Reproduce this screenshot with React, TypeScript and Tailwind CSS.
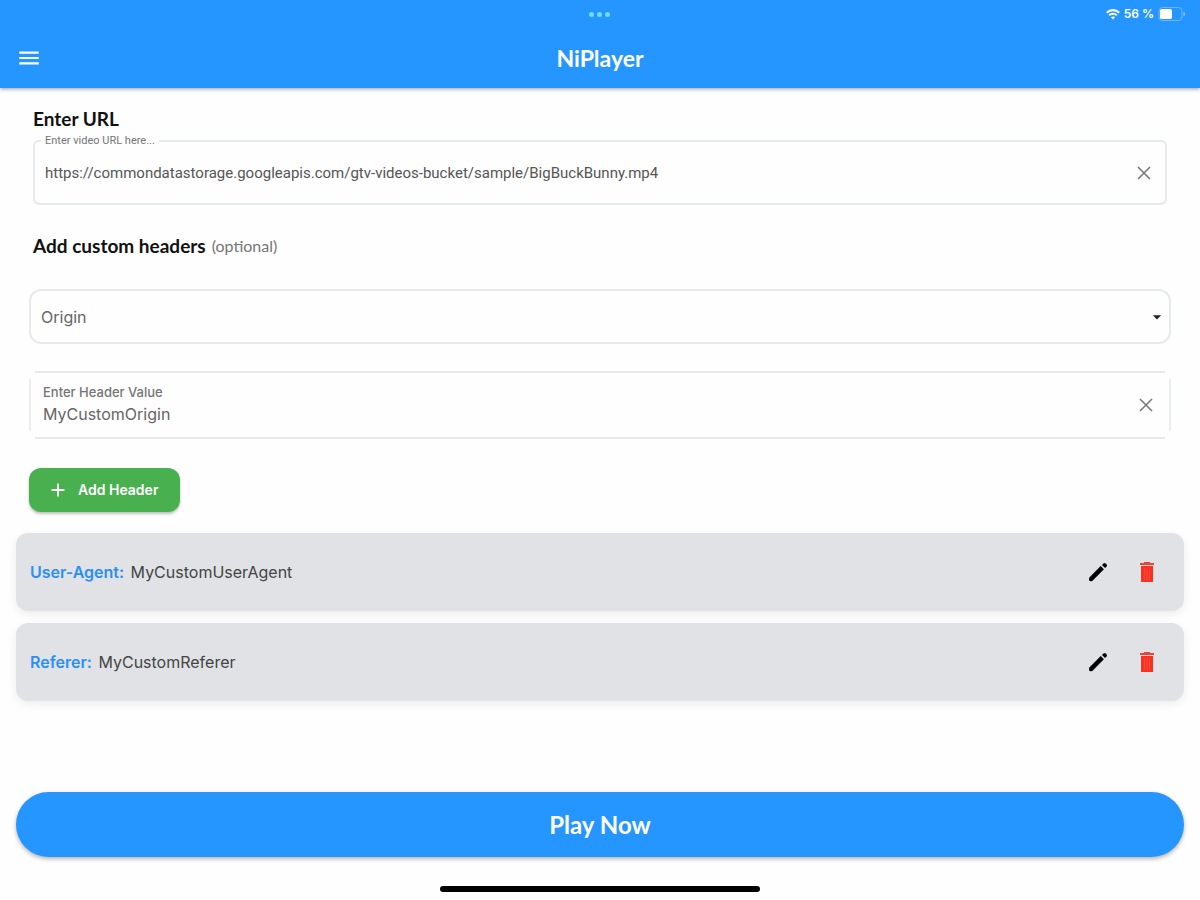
import React, { useState } from "react";
import { MdAdd, MdArrowDropDown, MdMenu } from "react-icons/md";

const headers = [
  { name: "User-Agent", value: "MyCustomUserAgent" },
  { name: "Referer", value: "MyCustomReferer" },
];

const CloseIcon = () => (
  <svg viewBox="0 0 14 14" className="w-3.5 h-3.5" stroke="#757575" strokeWidth="1.5" fill="none">
    <path d="M1 1L13 13M13 1L1 13" />
  </svg>
);

const PencilIcon = () => (
  <svg viewBox="0 0 20 20" className="w-5 h-5" fill="black">
    <path d="M1.6 15.2L12.7 4.1L15.9 7.3L4.8 18.4Q3.8 19.3 2.4 19.3Q1 19.3 1 17.6Q1 16 1.6 15.2Z" />
    <path d="M14 3.1L15.6 1.5Q16.6 0.7 17.6 1.5L18.6 2.5Q19.4 3.5 18.6 4.5L17 6.1Z" />
  </svg>
);

const TrashIcon = () => (
  <svg viewBox="0 0 14 20" className="w-3.5 h-5">
    <path d="M4 0H10V1H14V3H0V1H4Z" fill="#f5402f" />
    <path d="M1 4H13V20H1Z" fill="#fa3020" />
    <path d="M4.5 6V18M7 6V18M9.5 6V18" stroke="#fb4a3a" strokeWidth="1" />
  </svg>
);

const WifiIcon = () => (
  <svg viewBox="0 0 14 11" className="w-3.5 h-3" fill="none" stroke="white" strokeWidth="2.2">
    <path d="M0.8 4.2C4.4 0.7 9.6 0.7 13.2 4.2" />
    <path d="M3.2 6.8C5.4 4.8 8.6 4.8 10.8 6.8" />
    <path d="M7 11L4.9 8.7C6 7.7 8 7.7 9.1 8.7Z" fill="white" stroke="none" />
  </svg>
);

const BatteryIcon = () => (
  <svg viewBox="0 0 27 14" className="w-7 h-3.5">
    <rect x="0.5" y="0.5" width="23" height="13" rx="3.5" fill="none" stroke="#6db8ff" />
    <rect x="1.5" y="2" width="12" height="10" rx="1.5" fill="white" />
    <path d="M25 4.5C27 5.5 27 8.5 25 9.5Z" fill="#8cc6ff" />
  </svg>
);

const TopBar = () => {
  return (
    <header className="bg-[#2596ff] text-white h-[88px] shadow-[0_1px_4px_rgba(0,0,0,0.4)]">
      <div className="grid grid-cols-3 items-center h-7 px-3.5">
        <span />
        <div className="flex justify-center gap-x-[3px]">
          <span className="w-[5px] h-[5px] rounded-full bg-[#6fdcff]" />
          <span className="w-[5px] h-[5px] rounded-full bg-[#6fdcff]" />
          <span className="w-[5px] h-[5px] rounded-full bg-[#6fdcff]" />
        </div>
        <div className="flex justify-end items-center gap-x-1">
          <WifiIcon />
          <span className="font-['Inter',sans-serif] text-xs font-semibold">56 %</span>
          <BatteryIcon />
        </div>
      </div>
      <div className="grid grid-cols-3 items-center h-[60px] px-4">
        <button type="button" aria-label="Menu" className="w-6">
          <MdMenu className="text-[26px]" />
        </button>
        <h1 className="text-center text-[23px] font-bold">NiPlayer</h1>
      </div>
    </header>
  );
};

const App = () => {
  const [url, setUrl] = useState(
    "https://commondatastorage.googleapis.com/gtv-videos-bucket/sample/BigBuckBunny.mp4"
  );
  const [value, setValue] = useState("MyCustomOrigin");

  return (
    <div className="min-h-screen flex flex-col bg-[#fefefe] font-['Lato',sans-serif]">
      <TopBar />

      <main className="flex-1 flex flex-col px-4 pt-[19px]">
        <section className="px-[17px]">
          <h2 className="text-[19px] leading-6 font-bold text-[#111]">Enter URL</h2>
          <fieldset className="h-[70px] border-2 border-[#e6e9e9] rounded-md px-1.5 mt-1">
            <legend className="px-1 font-['Roboto',sans-serif] text-[11px] leading-3 text-[#757575]">
              <label htmlFor="url">Enter video URL here...</label>
            </legend>
            <div className="flex items-center h-[52px] px-1 pr-2">
              <input
                id="url"
                value={url}
                onChange={(e) => setUrl(e.target.value)}
                className="flex-1 font-['Roboto',sans-serif] text-[15px] text-[#555] outline-none"
              />
              <button type="button" aria-label="Clear URL" onClick={() => setUrl("")}>
                <CloseIcon />
              </button>
            </div>
          </fieldset>
          <div className="flex items-center gap-x-1.5 mt-[29px] text-[#111]">
            <h2 className="text-[19px] leading-6 font-bold">Add custom headers</h2>
            <span className="text-base leading-6 text-[#757575]">(optional)</span>
          </div>
        </section>

        <section className="px-[13px] font-['Inter',sans-serif]">
          <div className="grid items-center mt-[31px]">
            <select
              aria-label="Header name"
              className="col-start-1 row-start-1 h-[55px] w-full appearance-none border-2 border-[#e8eaea] rounded-xl px-2.5 text-base text-[#666] outline-none"
            >
              <option>Origin</option>
              <option>User-Agent</option>
              <option>Referer</option>
            </select>
            <MdArrowDropDown className="col-start-1 row-start-1 justify-self-end mr-1 text-xl text-[#222] pointer-events-none" />
          </div>

          <div className="flex mt-[27px] h-[68px]">
            <span className="w-0.5 my-2 bg-[#eceeee]" />
            <div className="flex-1 flex items-center mx-1 pl-2 pr-3 border-y-2 border-[#e8eaea]">
              <div className="flex-1 flex flex-col gap-y-0.5">
                <label htmlFor="value" className="text-[13px] leading-4 font-medium text-[#757575]">
                  Enter Header Value
                </label>
                <input
                  id="value"
                  value={value}
                  onChange={(e) => setValue(e.target.value)}
                  className="text-base text-[#666] outline-none"
                />
              </div>
              <button type="button" aria-label="Clear header value" onClick={() => setValue("")}>
                <CloseIcon />
              </button>
            </div>
            <span className="w-0.5 my-2 bg-[#eceeee]" />
          </div>

          <button
            type="button"
            className="flex items-center gap-x-[9px] mt-[29px] h-11 pl-[18px] pr-[22px] rounded-xl bg-[#49b050] text-white text-sm font-semibold shadow-[0_2px_3px_rgba(0,0,0,0.25)]"
          >
            <MdAdd className="text-[22px]" />
            Add Header
          </button>
        </section>

        <ul className="flex flex-col gap-y-3 mt-[21px] font-['Inter',sans-serif]">
          {headers.map((header) => (
            <li
              key={header.name}
              className="flex items-center h-[78px] pl-3.5 pr-[30px] rounded-xl bg-[#e0e2e5] text-base shadow-[0_3px_10px_rgba(0,0,0,0.07)]"
            >
              <p className="flex-1 text-[#444]">
                <span className="mr-0.5 font-semibold text-[#2b8ff5]">{header.name}:</span> {header.value}
              </p>
              <div className="flex items-center gap-x-8">
                <button type="button" aria-label={`Edit ${header.name}`}>
                  <PencilIcon />
                </button>
                <button type="button" aria-label={`Delete ${header.name}`}>
                  <TrashIcon />
                </button>
              </div>
            </li>
          ))}
        </ul>

        <button
          type="button"
          className="mt-auto h-[65px] rounded-full bg-[#2596ff] text-white text-2xl font-bold shadow-[0_2px_4px_rgba(0,0,0,0.3)]"
        >
          Play Now
        </button>
      </main>

      <footer className="flex justify-center pt-[29px] pb-2">
        <span className="w-80 h-1.5 rounded-full bg-black" />
      </footer>
    </div>
  );
};

export default App;
